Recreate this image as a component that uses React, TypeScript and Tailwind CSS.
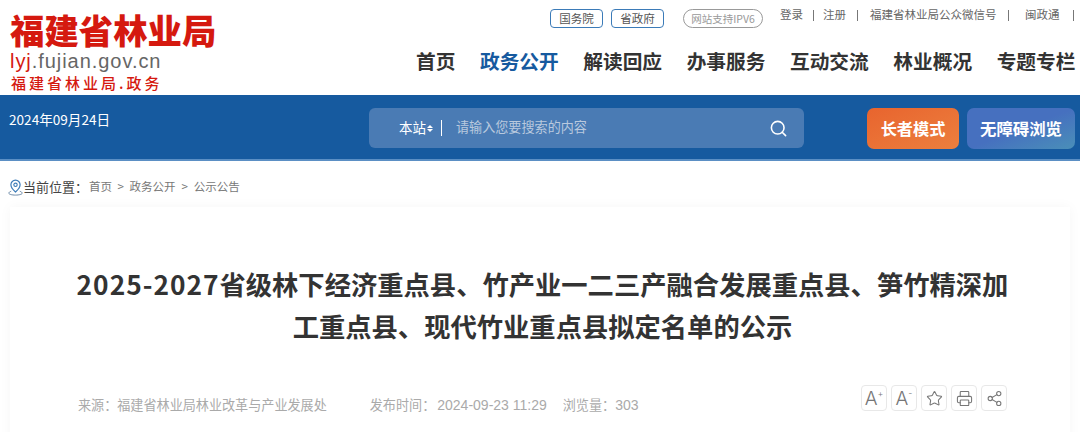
import React from "react";
import { Search, Star, Printer, Share2 } from "lucide-react";

const cjk = { fontFamily: '"Microsoft YaHei","Noto Sans CJK SC","Noto Sans",sans-serif' };

const nav = ["首页", "政务公开", "解读回应", "办事服务", "互动交流", "林业概况", "专题专栏"];

function ToolBtn({ children }: { children: React.ReactNode }) {
  return (
    <div className="w-[26px] h-[26px] flex items-center justify-center border border-[#e8e8e8] rounded-[4px] text-[#777] bg-white">
      {children}
    </div>
  );
}

export default function App() {
  return (
    <div className="w-[1080px] h-[432px] overflow-hidden bg-white" style={cjk}>
      <header className="h-[95px] flex">
        <div className="w-[230px] pl-[10px] pt-[11px] shrink-0">
          <div className="text-[34.4px] leading-[36px] font-black text-[#d5190f] whitespace-nowrap">福建省林业局</div>
          <div className="text-[20px] leading-[22px] mt-[3px] tracking-[0.95px] text-[#666] font-['Liberation_Sans',sans-serif] whitespace-nowrap">
            <span className="text-[#d5190f]">lyj</span>.fujian.gov.cn
          </div>
          <div className="text-[15px] leading-[20px] ml-[1px] mt-[1px] font-medium tracking-[3px] text-[#d5190f] whitespace-nowrap">福建省林业局.政务</div>
        </div>
        <div className="flex-1 min-w-0">
          <div className="flex items-center h-[28px] pt-[9px] pl-[320px] text-[11.5px] whitespace-nowrap">
            <span className="w-[53px] h-[19px] flex items-center justify-center border border-[#3b7bb8] rounded-[4px] text-[#555]">国务院</span>
            <span className="w-[53px] h-[19px] ml-[8px] flex items-center justify-center border border-[#3b7bb8] rounded-[4px] text-[#555]">省政府</span>
            <span className="w-[80px] h-[19px] ml-[19px] flex items-center justify-center border border-[#999] rounded-[10px] text-[#999] text-[10.5px]">网站支持IPV6</span>
            <div className="flex items-center text-[#666] -mt-[7px] ml-[17px]">
              <span>登录</span>
              <span className="ml-[9.5px] w-px h-[11px] bg-[#777]" />
              <span className="ml-[9.5px]">注册</span>
              <span className="ml-[11px] w-px h-[11px] bg-[#777]" />
              <span className="ml-[12px]">福建省林业局公众微信号</span>
              <span className="ml-[11px] w-px h-[11px] bg-[#777]" />
              <span className="ml-[16.5px]">闽政通</span>
              <span className="ml-[13.5px] w-px h-[11px] bg-[#777]" />
            </div>
          </div>
          <nav className="flex gap-[24.6px] pl-[186px] pt-[19px] text-[19.7px] leading-[28px] font-bold text-[#333] whitespace-nowrap">
            {nav.map((n) => (
              <span key={n} className={n === "政务公开" ? "text-[#165a9f]" : ""}>{n}</span>
            ))}
          </nav>
        </div>
      </header>

      <div className="h-[66px] bg-[#165a9f] border-b-2 border-[#5b8fc4] flex items-start">
        <div className="w-[369px] pl-[9px] pt-[16px] text-[13.6px] leading-[16px] text-white shrink-0 whitespace-nowrap">2024年09月24日</div>
        <div className="mt-[13px] w-[435px] h-[40px] rounded-[6px] bg-[#4a7bb4] flex items-center pl-[30px] pr-[16px] text-white">
          <span className="text-[13.5px] leading-[16px] -mt-[2px]">本站</span>
          <span className="flex flex-col gap-[1px] ml-[1px]">
            <span className="w-0 h-0 border-x-[3px] border-x-transparent border-b-[3px] border-b-white" />
            <span className="w-0 h-0 border-x-[3px] border-x-transparent border-t-[3px] border-t-white" />
          </span>
          <span className="ml-[8px] w-px h-[16px] bg-white" />
          <span className="ml-[14px] text-[13.1px] leading-[16px] -mt-[2px] text-[#b9c9de] flex-1">请输入您要搜索的内容</span>
          <Search size={19} strokeWidth={2} />
        </div>
        <div className="mt-[13px] ml-[63px] w-[92px] h-[41px] rounded-[7px] bg-gradient-to-br from-[#e8642e] to-[#ec7f3e] flex items-center justify-center text-white text-[16.2px] font-bold whitespace-nowrap">长者模式</div>
        <div className="mt-[13px] ml-[8px] w-[108px] h-[41px] rounded-[7px] bg-gradient-to-br from-[#4670bf] via-[#4670bf] to-[#4a8fb8] flex items-center justify-center text-white text-[16.4px] font-bold whitespace-nowrap">无障碍浏览</div>
      </div>

      <div className="h-[46px] pl-[9px] pt-[6px] flex items-center text-[#777] text-[11.5px] whitespace-nowrap">
        <svg width="15" height="17" viewBox="0 0 15 17" fill="none" className="shrink-0 -ml-px">
          <path d="M7.5 1.2a4.6 4.6 0 0 0-4.6 4.6c0 3.2 4.6 7.2 4.6 7.2s4.6-4 4.6-7.2a4.6 4.6 0 0 0-4.6-4.6Z" stroke="#3b7bb8" strokeWidth="1.2" />
          <circle cx="7.5" cy="5.8" r="1.7" stroke="#3b7bb8" strokeWidth="1.1" />
          <path d="M3.2 12.2c-1.4.5-2.4 1.2-2.4 2 0 1 3 1.9 6.7 1.9s6.7-.9 6.7-1.9c0-.8-1-1.5-2.4-2" stroke="#6d8aa8" strokeWidth="1" />
        </svg>
        <span className="text-[13px] text-[#444] w-[66px]">当前位置：</span>
        <span>首页</span>
        <span className="mx-[5.5px]">&gt;</span>
        <span>政务公开</span>
        <span className="mx-[6px]">&gt;</span>
        <span>公示公告</span>
      </div>

      <main className="ml-[10px] w-[1060px] h-[300px] bg-white shadow-[0_0_12px_rgba(0,0,0,0.04)] pl-[68px] pr-[63px] pt-[56px]">
        <h1 className="text-[26.3px] leading-[41.5px] -mx-[8px] font-bold text-[#333] text-center">
          <span className="tracking-[1px]">2025-2027</span>省级林下经济重点县、竹产业一二三产融合发展重点县、笋竹精深加工重点县、现代竹业重点县拟定名单的公示
        </h1>
        <div className="mt-[39px] flex items-start justify-between text-[13.1px] text-[#aaa] whitespace-nowrap">
          <div className="flex pt-[10px]">
            <span>来源：福建省林业局林业改革与产业发展处</span>
            <span className="ml-[43px]">发布时间：<span className="ml-[2px] font-['Liberation_Sans',sans-serif] text-[14px]">2024-09-23 11:29</span></span>
            <span className="ml-[16px]">浏览量：<span className="font-['Liberation_Sans',sans-serif] text-[14px]">303</span></span>
          </div>
          <div className="flex gap-[4px]">
            <ToolBtn><span className="text-[19px] leading-none font-['Inter',sans-serif] font-light flex items-start">A<span className="text-[9px] leading-[9px]">+</span></span></ToolBtn>
            <ToolBtn><span className="text-[19px] leading-none font-['Inter',sans-serif] font-light flex items-start">A<span className="text-[9px] leading-[7px]">-</span></span></ToolBtn>
            <ToolBtn><Star size={17} strokeWidth={1.5} /></ToolBtn>
            <ToolBtn><Printer size={17} strokeWidth={1.5} /></ToolBtn>
            <ToolBtn><Share2 size={17} strokeWidth={1.5} /></ToolBtn>
          </div>
        </div>
      </main>
    </div>
  );
}
